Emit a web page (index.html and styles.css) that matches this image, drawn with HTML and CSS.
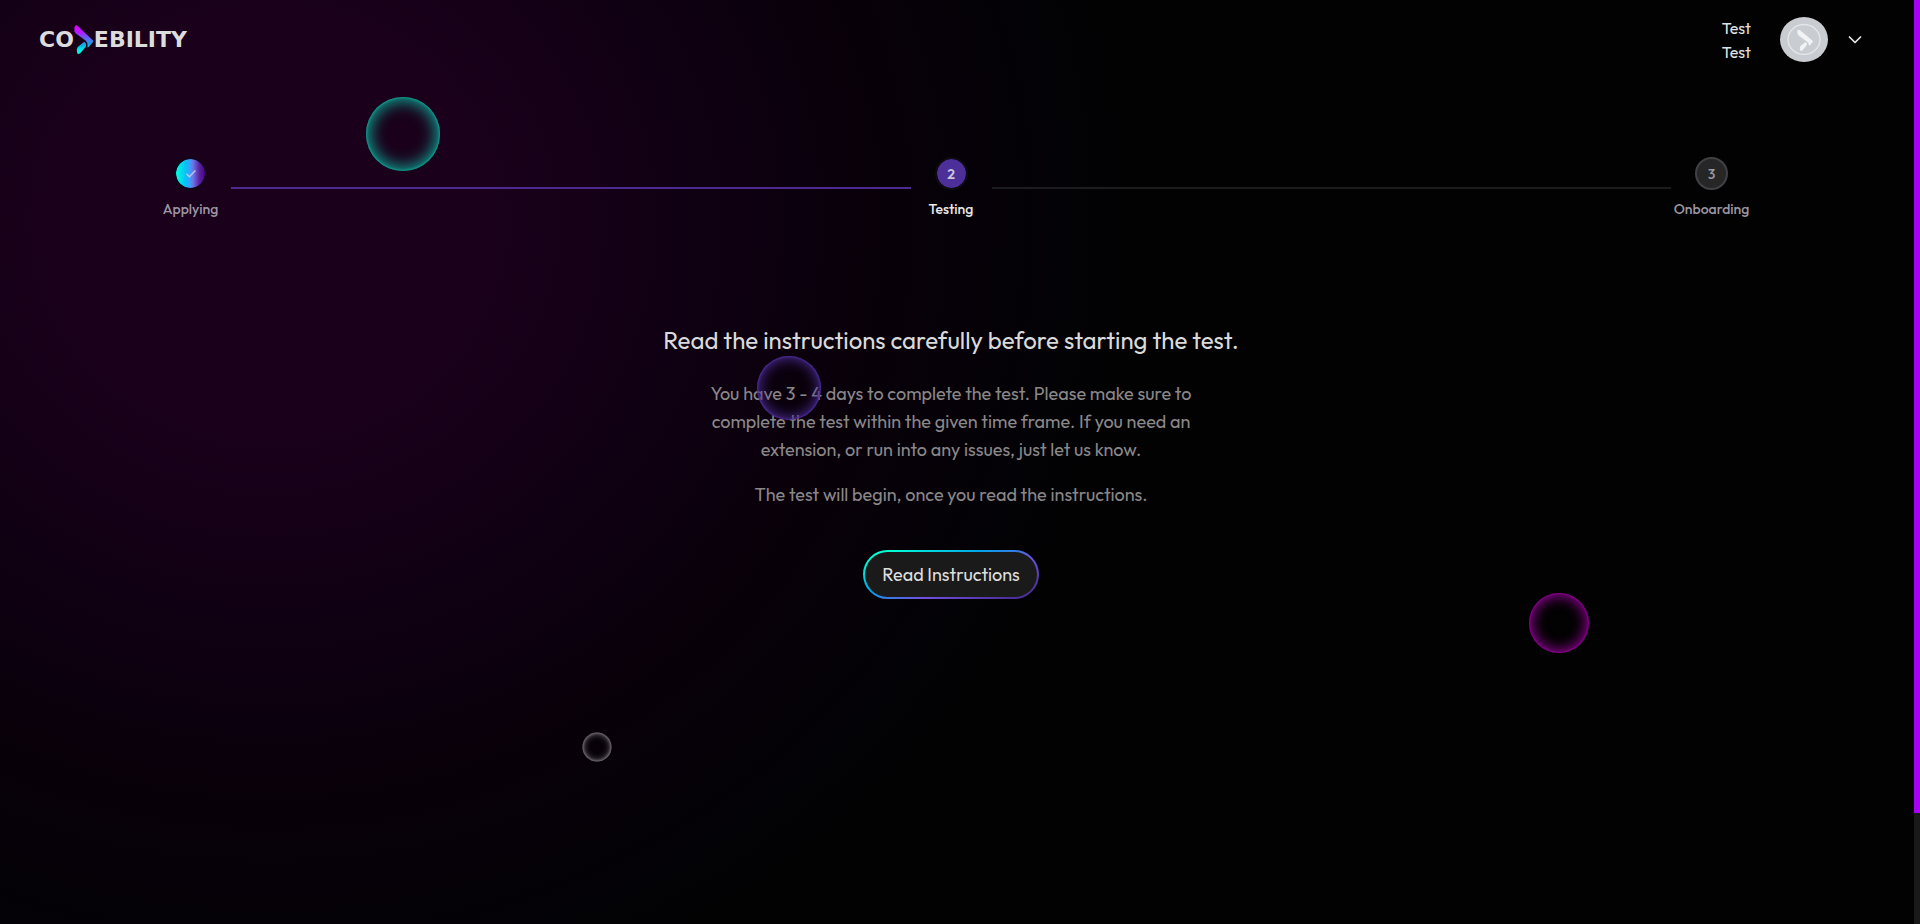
FILE: index.html
```html
<!DOCTYPE html>
<html lang="en">
<head>
<meta charset="utf-8">
<meta name="viewport" content="width=device-width, initial-scale=1">
<title>Codebility - Testing</title>
<link rel="stylesheet" href="styles.css">
</head>
<body>
<div class="page">
  <header class="header">
    <a class="logo" href="#" aria-label="Codebility">
      <span>CO</span>
      <svg class="logo-mark" viewBox="0 0 20 30" aria-hidden="true">
        <defs>
          <linearGradient id="mark" gradientUnits="userSpaceOnUse" x1="0" y1="0" x2="0" y2="30">
            <stop offset="0" stop-color="#e400ff"/>
            <stop offset=".25" stop-color="#b41cff"/>
            <stop offset=".5" stop-color="#4a78f0"/>
            <stop offset=".65" stop-color="#10a8e0"/>
            <stop offset=".85" stop-color="#00f0e0"/>
            <stop offset="1" stop-color="#00ffe0"/>
          </linearGradient>
        </defs>
        <path fill="url(#mark)" d="M2 0.3Q0.3 1 0.4 3.5V6.4L1.6 8.2L11.2 15.2Q14.4 18 13.4 22.6L14.6 22L19.2 16.8Q19.6 16 18.8 15.2L4.5 1.7Q3 0.3 2 .3Z"/>
        <path fill="url(#mark)" d="M10.2 16.8Q13.6 19.4 11.2 22.6L6.2 28.2Q4.4 29.6 3.2 28.2L2.8 24.4Q3 22.6 4.4 21.4Z"/>
      </svg>
      <span>EBILITY</span>
    </a>
    <div class="account">
      <div class="names"><span>Test</span><span>Test</span></div>
      <svg class="avatar" viewBox="0 0 48 46" role="img" aria-label="Profile picture">
        <ellipse cx="24" cy="22.5" rx="24" ry="22.5" fill="#c9ccd1"/>
        <ellipse cx="24" cy="22.5" rx="16" ry="15" fill="none" stroke="#e4e6e8" stroke-width="1.4"/>
        <path fill="#f2f3f4" d="M17.5 13.3Q18.4 12.3 20 13.3L32.4 23.4Q33.5 24.5 32.3 25.6L29.3 29Q28.8 26 26.8 24.4L18.4 18.2Q16.8 16.6 17.5 13.3ZM25.5 25Q28 27 26 29L22.8 33Q21 35 19.9 33Q19.2 30.4 20.8 28.8Z"/>
      </svg>
      <button class="menu" aria-label="Open account menu">
        <svg viewBox="0 0 14 10" aria-hidden="true"><path d="M1.5 2L7 7.5L12.5 2"/></svg>
      </button>
    </div>
  </header>

  <main>
    <ol class="stepper">
      <li class="step done">
        <span class="dot"><svg viewBox="0 0 12 10" aria-label="Done"><path d="M1.5 4.8L4.4 7.8L10.4 1.6"/></svg></span>
        <span class="label">Applying</span>
      </li>
      <li class="bar filled" aria-hidden="true"></li>
      <li class="step current" aria-current="step">
        <span class="dot">2</span><span class="label">Testing</span>
      </li>
      <li class="bar" aria-hidden="true"></li>
      <li class="step upcoming">
        <span class="dot">3</span><span class="label">Onboarding</span>
      </li>
    </ol>

    <section class="intro">
      <h1>Read the instructions carefully before starting the test.</h1>
      <div class="copy">
        <p>You have 3 - 4 days to complete the test. Please make sure to<br>complete the test within the given time frame. If you need an<br>extension, or run into any issues, just let us know.</p>
        <p>The test will begin, once you read the instructions.</p>
      </div>
      <button class="cta">Read Instructions</button>
    </section>
  </main>

  <div class="bubble teal"></div>
  <div class="bubble violet"></div>
  <div class="bubble magenta"></div>
  <div class="bubble grey"></div>
  <div class="scroll-track"><div class="scroll-thumb"></div></div>
</div>
</body>
</html>
```
FILE: styles.css
```css
* { box-sizing: border-box; }

body {
  margin: 0;
  background: #020202;
  color: #e0e0e0;
  font-family: Outfit, Lato, sans-serif;
  font-size: 16px;
}

.page {
  position: relative;
  min-height: 100vh;
  overflow: hidden;
  background: radial-gradient(ellipse 46% 90% at 14% 24%, #1b001c 0%, #1a001b 25%, #0f0012 50%, #080009 70%, #030206 90%, #020202 100%);
}

.header {
  display: flex;
  align-items: center;
  justify-content: space-between;
  height: 79px;
  padding: 0 56px 0 39px;
}

.logo {
  display: flex;
  align-items: center;
  color: #dcdcdc;
  font: bold 22px/30px "DejaVu Sans", sans-serif;
  text-decoration: none;
}

.logo-mark { width: 20px; height: 30px; }

.account { display: flex; align-items: center; }

.names {
  display: flex;
  flex-direction: column;
  margin-right: 29px;
  font-size: 16px;
  line-height: 24px;
}

.avatar { width: 48px; height: 46px; }

.menu {
  display: flex;
  margin-left: 18px;
  padding: 2px;
  border: 0;
  background: none;
}

.menu svg { width: 14px; height: 10px; }

.menu path {
  fill: none;
  stroke: #e8e8e8;
  stroke-width: 1.7;
  stroke-linecap: round;
  stroke-linejoin: round;
}

main {
  display: flex;
  flex-direction: column;
  align-items: center;
  padding: 78px 18px 0 0;
}

.stepper {
  display: flex;
  width: 85%;
  max-width: 1602px;
  margin: 0;
  padding: 0;
  list-style: none;
}

.step {
  display: flex;
  flex-direction: column;
  align-items: center;
  gap: 8px;
  width: 81px;
  color: #9c97a3;
  font-size: 14px;
  font-weight: 500;
  line-height: 22px;
}

.dot {
  display: flex;
  align-items: center;
  justify-content: center;
  width: 33px;
  height: 33px;
  border: 2px solid #0d0b11;
  border-radius: 50%;
}

.done .dot {
  border-color: #12051a;
  background: linear-gradient(90deg, #00ffe0 0%, #00c8f5 30%, #3f9cff 48%, #6a78e8 58%, #5b22a0 80%, #4b0082 100%) padding-box;
}

.done svg { width: 12px; height: 10px; }
.done path { fill: none; stroke: #c0c8ea; stroke-width: 1.4; }

.current .label { color: #e8e8e8; }
.current .dot { background: #4c2f99 padding-box; color: #ccc4dd; font-weight: 600; }

.upcoming .dot { border-color: #414045; background: #262626; }

.bar {
  flex: 1;
  height: 2px;
  margin-top: 30px;
  background: #1c1c1e;
}

.bar.filled { background: #4d2a91; }

.intro {
  display: flex;
  flex-direction: column;
  align-items: center;
  margin-top: 104px;
  text-align: center;
}

h1 {
  margin: 0;
  color: #dadada;
  font-size: 24px;
  font-weight: 400;
  line-height: 32px;
}

.copy {
  display: flex;
  flex-direction: column;
  gap: 17px;
  margin-top: 24px;
  color: #8a8789;
  font-size: 18px;
  line-height: 28px;
}

.copy p { margin: 0; }

.cta {
  height: 49px;
  margin-top: 41px;
  padding: 0 17px;
  border: 2px solid transparent;
  border-radius: 25px;
  background:
    linear-gradient(#1a1a1a, #1a1a1a) padding-box,
    linear-gradient(160deg, #00ffd5 10%, #00a5e8 38%, #7050e0 62%, #4c2f99 90%) border-box;
  color: #dedede;
  font: inherit;
  font-size: 18px;
}

.bubble {
  position: absolute;
  border-radius: 50%;
  transform: translate(-50%, -50%);
  pointer-events: none;
}

.teal {
  left: 21%;
  top: 134px;
  width: 74px;
  height: 74px;
  box-shadow: inset 0 0 2px 1px #0f9a8c, inset 0 0 15px 4px #0f9a8c;
}

.violet {
  left: 41.1%;
  top: 388px;
  width: 64px;
  height: 64px;
  box-shadow: inset 0 0 2px 1px #4b2b94, inset 0 0 13px 2px #4b2b94;
}

.magenta {
  left: 81.2%;
  top: 623px;
  width: 60px;
  height: 60px;
  box-shadow: inset 0 0 2px 1px #86008a, inset 0 0 13px 3px #86008a;
}

.grey {
  left: 31.1%;
  top: 747px;
  width: 29px;
  height: 29px;
  box-shadow: inset 0 0 2px 1px #6a676c, inset 0 0 6px 1px #6a676c;
}

.scroll-track {
  position: fixed;
  top: 0;
  right: 0;
  bottom: 0;
  width: 6px;
  background: #191919;
}

.scroll-thumb { height: 88%; background: #a800f5; }
```
